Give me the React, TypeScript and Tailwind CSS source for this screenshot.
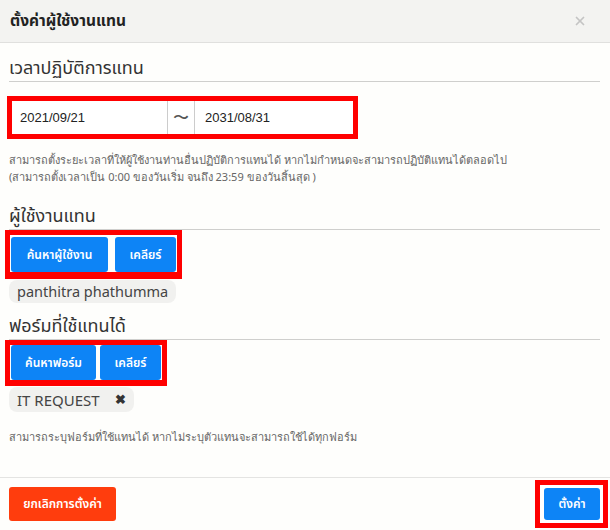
import { X } from "lucide-react";

const sans = { fontFamily: '"Noto Sans", "Noto Sans Thai", Tahoma, sans-serif' };
const arial = { fontFamily: '"Liberation Sans", Tahoma, "Noto Sans", sans-serif' };

interface SectionTitleProp {
    title: string;
    className?: string;
}
const SectionTitle: React.FC<SectionTitleProp> = ({ title, className = "" }: SectionTitleProp) => {
    return (
        <div className={`border-b border-[#cfcfcd] pb-[2px] text-[18px] leading-[24px] text-[#333] ${className}`} style={sans}>
            {title}
        </div>
    );
};

const BlueButton: React.FC<{ label: string; className?: string }> = ({ label, className = "" }) => (
    <button className={`h-[35px] rounded-[3px] bg-[#0d84f6] text-white text-[12px] font-semibold ${className}`} style={sans}>
        {label}
    </button>
);

export default function App() {
    return (
        <div className="w-[610px] h-[530px] bg-[#fefefc] flex flex-col overflow-hidden">
            <div className="h-[43px] shrink-0 bg-[#f3f3f1] border-b border-[#e0e0de] px-[10px] flex items-center justify-between">
                <span className="text-[15.5px] font-bold text-[#222]" style={sans}>ตั้งค่าผู้ใช้งานแทน</span>
                <X size={14} strokeWidth={3} className="text-[#c4c4c4] mr-[13px]" />
            </div>

            <div className="flex-1 pl-[9px] pr-[10px]">
                <SectionTitle title="เวลาปฏิบัติการแทน" className="mt-[12px]" />

                <div className="mt-[14px] ml-[-2px] w-[351px] border-[5px] border-[#ff0000] flex h-[43px] bg-white">
                    <div className="w-[156px] border-r border-[#cccccc] flex items-center pl-[8px] text-[13px] text-[#222]" style={arial}>2021/09/21</div>
                    <div className="w-[27px] border-r border-[#cccccc] flex items-center justify-center text-[16px] text-[#555]" style={arial}>〜</div>
                    <div className="flex-1 flex items-center pl-[10px] text-[13px] text-[#222]" style={arial}>2031/08/31</div>
                </div>

                <div className="mt-[12px] text-[11px] leading-[17px] text-[#666]" style={{ fontFamily: 'Tahoma, "Noto Sans", sans-serif' }}>
                    <p>สามารถตั้งระยะเวลาที่ให้ผู้ใช้งานท่านอื่นปฏิบัติการแทนได้ หากไม่กำหนดจะสามารถปฏิบัติแทนได้ตลอดไป</p>
                    <p>(สามารถตั้งเวลาเป็น 0:00 ของวันเริ่ม จนถึง 23:59 ของวันสิ้นสุด )</p>
                </div>

                <SectionTitle title="ผู้ใช้งานแทน" className="mt-[18px]" />

                <div className="ml-[-4px] w-[177px] border-[5px] border-b-[7px] border-[#ff0000] flex gap-[7px] pt-[2px] pl-[1px]">
                    <BlueButton label="ค้นหาผู้ใช้งาน" className="w-[97px]" />
                    <BlueButton label="เคลียร์" className="w-[61px]" />
                </div>
                <div className="mt-[1px] inline-flex items-center h-[23px] px-[8px] rounded-[8px] bg-[#f1f1ef] text-[14.5px] text-[#444]" style={sans}>
                    panthitra phathumma
                </div>

                <SectionTitle title="ฟอร์มที่ใช้แทนได้" className="mt-[10px]" />

                <div className="ml-[-4px] w-[162px] border-[5px] border-b-[6px] border-[#ff0000] flex gap-[4px] pl-[1px]">
                    <BlueButton label="ค้นหาฟอร์ม" className="w-[85px]" />
                    <BlueButton label="เคลียร์" className="w-[61px]" />
                </div>
                <div className="mt-[1px] inline-flex items-center gap-[15px] h-[25px] px-[8px] rounded-[8px] bg-[#f1f1ef] text-[15px] text-[#444]" style={sans}>
                    IT REQUEST
                    <span className="text-[13px] font-bold text-[#333]">✖</span>
                </div>

                <p className="mt-[16px] text-[11px] leading-[17px] text-[#666]" style={{ fontFamily: 'Tahoma, "Noto Sans", sans-serif' }}>
                    สามารถระบุฟอร์มที่ใช้แทนได้ หากไม่ระบุตัวแทนจะสามารถใช้ได้ทุกฟอร์ม
                </p>
            </div>

            <div className="h-[53px] shrink-0 border-t border-[#e4e4e2] flex items-center justify-between pl-[9px] pr-[2px]">
                <button className="h-[34px] w-[107px] rounded-[3px] bg-[#ff3d0d] text-white text-[12px] font-semibold" style={sans}>
                    ยกเลิกการตั้งค่า
                </button>
                <div className="border-[5px] border-[#ff0000] p-[3px] pl-[4px] pr-[3px] bg-white">
                    <button className="h-[32px] w-[56px] rounded-[3px] bg-[#0d84f6] text-white text-[12px] font-semibold block" style={sans}>
                        ตั้งค่า
                    </button>
                </div>
            </div>
        </div>
    );
}
